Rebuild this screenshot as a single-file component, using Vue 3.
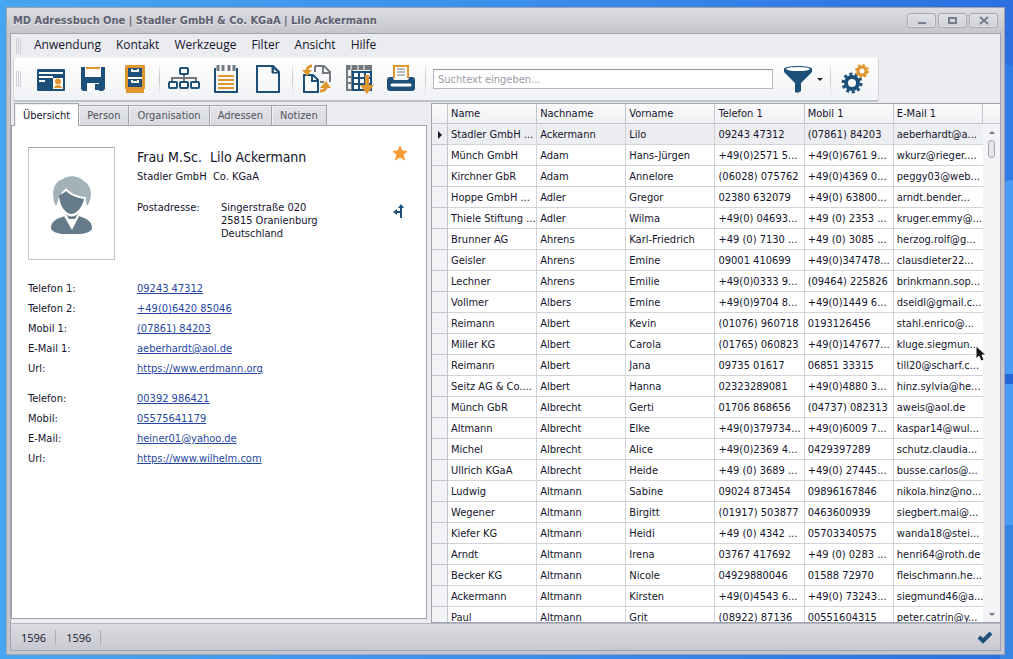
<script setup>
import { ref } from 'vue'

const query = ref('')
const menus = ['Anwendung', 'Kontakt', 'Werkzeuge', 'Filter', 'Ansicht', 'Hilfe']
const tabs = ['Übersicht', 'Person', 'Organisation', 'Adressen', 'Notizen']
const columns = ['Name', 'Nachname', 'Vorname', 'Telefon 1', 'Mobil 1', 'E-Mail 1']

const groups = [
  [
    ['Telefon 1:', '09243 47312'],
    ['Telefon 2:', '+49(0)6420 85046'],
    ['Mobil 1:', '(07861) 84203'],
    ['E-Mail 1:', 'aeberhardt@aol.de'],
    ['Url:', 'https://www.erdmann.org'],
  ],
  [
    ['Telefon:', '00392 986421'],
    ['Mobil:', '05575641179'],
    ['E-Mail:', 'heiner01@yahoo.de'],
    ['Url:', 'https://www.wilhelm.com'],
  ],
]

const rows = [
  ['Stadler GmbH ...', 'Ackermann', 'Lilo', '09243 47312', '(07861) 84203', 'aeberhardt@a...'],
  ['Münch GmbH', 'Adam', 'Hans-Jürgen', '+49(0)2571 5...', '+49(0)6761 9...', 'wkurz@rieger....'],
  ['Kirchner GbR', 'Adam', 'Annelore', '(06028) 075762', '+49(0)4369 0...', 'peggy03@web...'],
  ['Hoppe GmbH ...', 'Adler', 'Gregor', '02380 632079', '+49(0) 63800...', 'arndt.bender...'],
  ['Thiele Stiftung ...', 'Adler', 'Wilma', '+49(0) 04693...', '+49 (0) 2353 ...', 'kruger.emmy@...'],
  ['Brunner AG', 'Ahrens', 'Karl-Friedrich', '+49 (0) 7130 ...', '+49 (0) 3085 ...', 'herzog.rolf@g...'],
  ['Geisler', 'Ahrens', 'Emine', '09001 410699', '+49(0)347478...', 'clausdieter22...'],
  ['Lechner', 'Ahrens', 'Emilie', '+49(0)0333 9...', '(09464) 225826', 'brinkmann.sop...'],
  ['Vollmer', 'Albers', 'Emine', '+49(0)9704 8...', '+49(0)1449 6...', 'dseidl@gmail.c...'],
  ['Reimann', 'Albert', 'Kevin', '(01076) 960718', '0193126456', 'stahl.enrico@...'],
  ['Miller KG', 'Albert', 'Carola', '(01765) 060823', '+49(0)147677...', 'kluge.siegmun...'],
  ['Reimann', 'Albert', 'Jana', '09735 01617', '06851 33315', 'till20@scharf.c...'],
  ['Seitz AG & Co....', 'Albert', 'Hanna', '02323289081', '+49(0)4880 3...', 'hinz.sylvia@he...'],
  ['Münch GbR', 'Albrecht', 'Gerti', '01706 868656', '(04737) 082313', 'aweis@aol.de'],
  ['Altmann', 'Albrecht', 'Elke', '+49(0)379734...', '+49(0)6009 7...', 'kaspar14@wul...'],
  ['Michel', 'Albrecht', 'Alice', '+49(0)2369 4...', '0429397289', 'schutz.claudia...'],
  ['Ullrich KGaA', 'Albrecht', 'Heide', '+49 (0) 3689 ...', '+49(0) 27445...', 'busse.carlos@...'],
  ['Ludwig', 'Altmann', 'Sabine', '09024 873454', '09896167846', 'nikola.hinz@no...'],
  ['Wegener', 'Altmann', 'Birgitt', '(01917) 503877', '0463600939', 'siegbert.mai@...'],
  ['Kiefer KG', 'Altmann', 'Heidi', '+49 (0) 4342 ...', '05703340575', 'wanda18@stei...'],
  ['Arndt', 'Altmann', 'Irena', '03767 417692', '+49 (0) 0283 ...', 'henri64@roth.de'],
  ['Becker KG', 'Altmann', 'Nicole', '04929880046', '01588 72970', 'fleischmann.he...'],
  ['Ackermann', 'Altmann', 'Kirsten', '+49(0)4543 6...', '+49(0) 73243...', 'siegmund46@a...'],
  ['Paul', 'Altmann', 'Grit', '(08922) 87136', '00551604315', 'peter.catrin@y...'],
]
</script>

<template>
  <div class="desktop">
    <svg class="wallpaper" viewBox="0 0 1013 659" preserveAspectRatio="none" aria-hidden="true">
      <defs>
        <linearGradient id="sky" x1="0" y1="0" x2="1" y2="0">
          <stop offset="0" stop-color="#46a6f1" />
          <stop offset=".5" stop-color="#3b8fec" />
          <stop offset="1" stop-color="#2c70e0" />
        </linearGradient>
      </defs>
      <rect width="1013" height="659" fill="url(#sky)" />
      <path d="M1000 60 L1013 66 V190 L1000 180Z" fill="#2f7ce6" />
      <path d="M1000 182 L1013 180 V374 L1000 374Z" fill="#479df1" />
      <path d="M1000 374 H1013 V384 H1000Z" fill="#2466d6" />
      <path d="M1000 384 H1013 V525 H1000Z" fill="#479df1" />
      <path d="M1000 525 H1013 V659 H1000Z" fill="#3684e4" />
    </svg>

    <div class="window">
      <header class="titlebar">
        <h1>MD Adressbuch One | Stadler GmbH &amp; Co. KGaA | Lilo Ackermann</h1>
        <div class="controls">
          <button aria-label="Minimieren"><svg width="12" height="10"><path d="M2 7h8" stroke="#787c8c" stroke-width="2" /></svg></button>
          <button aria-label="Maximieren"><svg width="12" height="10"><rect x="2" y="2" width="7" height="5" fill="none" stroke="#787c8c" stroke-width="2" /></svg></button>
          <button aria-label="Schließen"><svg width="12" height="10"><path d="M2 1 10 8M10 1 2 8" stroke="#787c8c" stroke-width="2" /></svg></button>
        </div>
      </header>

      <div class="client">
        <nav class="menubar">
          <span class="grip"></span>
          <button v-for="m in menus" :key="m">{{ m }}</button>
        </nav>

        <div class="toolbar">
          <span class="grip"></span>
          <button class="tool" aria-label="Neuer Kontakt">
            <svg viewBox="0 0 32 32">
              <rect x="2" y="6" width="28" height="22" rx="1" fill="#1d5078" />
              <path d="M4 10h24M4 14h14M4 18h6" stroke="#fff" stroke-width="2" />
              <rect x="18" y="15" width="10" height="11" fill="#fff" />
              <circle cx="23" cy="18.500" r="3" fill="#e0962e" />
              <path d="M19 25c0-4 8-4 8 0Z" fill="#e0962e" />
            </svg>
          </button>
          <button class="tool" aria-label="Speichern">
            <svg viewBox="0 0 32 32">
              <path d="M4 4h24v22l-2 2H6l-2-2Z" fill="#1d5078" />
              <path d="M8 4h16v10H8ZM10 20h12v8H10Z" fill="#fff" />
              <rect x="9" y="4" width="14" height="2" fill="#e0962e" />
              <path d="M18 21h4v6h-4Z" fill="#1d5078" />
            </svg>
          </button>
          <button class="tool" aria-label="Archiv">
            <svg viewBox="0 0 32 32">
              <path d="M6 3q0-1 1-1h18q1 0 1 1v23h-1v4H7v-4H6Z" fill="#e0962e" />
              <path d="M9 5h14v9H9ZM9 16h14v8H9Z" fill="#1d5078" />
              <path d="M9 15h14" stroke="#fff" stroke-width="2" />
              <path d="M13 6v2h6V6M13 17v2h6V17" fill="none" stroke="#fff" stroke-width="2" />
            </svg>
          </button>
          <span class="sep"></span>
          <button class="tool" aria-label="Struktur">
            <svg viewBox="0 0 32 32" fill="none">
              <path d="M16 11v8M4 19v-4h24v4" stroke="#747980" stroke-width="2" />
              <g stroke="#1d5078" stroke-width="2" fill="#fff">
                <rect x="12" y="5" width="8" height="6" rx="1" />
                <rect x="1" y="19" width="8" height="6" rx="1" />
                <rect x="12" y="19" width="8" height="6" rx="1" />
                <rect x="23" y="19" width="8" height="6" rx="1" />
              </g>
            </svg>
          </button>
          <button class="tool" aria-label="Notiz">
            <svg viewBox="0 0 32 32" fill="none">
              <path d="M5 5v24h22V5" stroke="#1d5078" stroke-width="2" stroke-linejoin="round" />
              <path d="M8 2v6M13 2v6M19 2v6M24 2v6" stroke="#747980" stroke-width="3" />
              <path d="M8 13h16M8 17h16M8 21h16M8 25h16" stroke="#e0962e" stroke-width="2" />
            </svg>
          </button>
          <button class="tool" aria-label="Dokument">
            <svg viewBox="0 0 32 32" fill="none">
              <path d="M5 3h16l6 6v20H5Z" stroke="#1d5078" stroke-width="2" />
              <path d="M20 3v7h7Z" fill="#1d5078" stroke="#1d5078" />
              <path d="M22 6v3h3Z" fill="#fff" />
            </svg>
          </button>
          <span class="sep"></span>
          <button class="tool" aria-label="Abgleichen">
            <svg viewBox="0 0 32 32" fill="none">
              <path d="M14 3h9l6 6v10M14 3v6M19 19h4M22 3v7h7" stroke="#747980" stroke-width="2" />
              <path d="M3 12h9l5 5v12H3Z" fill="#fff" stroke="#1d5078" stroke-width="2" />
              <path d="M11 12v6h6" stroke="#1d5078" stroke-width="2" />
              <path d="M11 3C7 3 6 5 6 9" stroke="#e0962e" stroke-width="3" />
              <path d="M1 7h10l-5 6Z" fill="#e0962e" />
              <path d="M19 28c5 0 6-2 6-5" stroke="#e0962e" stroke-width="3" />
              <path d="M19 25l6-7 5 7Z" fill="#e0962e" />
            </svg>
          </button>
          <button class="tool" aria-label="Tabelle exportieren">
            <svg viewBox="0 0 32 32" fill="none">
              <path d="M3 2h26v5H3Z" fill="#747980" />
              <path d="M8 2v5M15 2v5M21 2v5" stroke="#fff" />
              <path d="M4 7v20h6M3 14h6M3 20h6M28 7v3M9 7v20" stroke="#747980" stroke-width="2" />
              <path d="M10 9h18v18H10ZM10 15h18M10 21h18M16 9v18M22 9v18" stroke="#1d5078" stroke-width="2" />
              <path d="M22 12h4v10h5l-7 9-7-9h5Z" fill="#e0962e" />
            </svg>
          </button>
          <button class="tool" aria-label="Drucken">
            <svg viewBox="0 0 32 32" fill="none">
              <path d="M9 15V3h14v12" fill="#fff" stroke="#e0962e" stroke-width="2" />
              <path d="M12 6h8M12 9h8M12 12h8" stroke="#747980" />
              <path d="M5 14h3q0 3 2 3h12q2 0 2-3h3q3 0 3 3v8q0 3-3 3H5q-3 0-3-3v-8q0-3 3-3Z" fill="#1d5078" />
              <path d="M7 22h18" stroke="#fff" stroke-width="3" stroke-linecap="round" />
            </svg>
          </button>
          <span class="sep"></span>
          <input v-model="query" class="search" type="text" aria-label="Suchtext" placeholder="Suchtext eingeben..." />
          <button class="tool filter" aria-label="Filter">
            <svg viewBox="0 0 32 32" fill="none">
              <path d="M2 6c0-4 28-4 28 0v3L19 20v8q-3 3-6 1V20L2 9Z" fill="#1d5078" />
              <ellipse cx="16" cy="6" rx="12" ry="2" fill="#fff" />
            </svg>
            <span class="caret"></span>
          </button>
          <span class="sep"></span>
          <button class="tool" aria-label="Einstellungen">
            <svg viewBox="0 0 32 32" fill="none">
              <circle cx="13" cy="20" r="6" stroke="#1d5078" stroke-width="4" />
              <circle cx="13" cy="20" r="9" stroke="#1d5078" stroke-width="3" stroke-dasharray="3 2.650" />
              <circle cx="23" cy="8" r="4" stroke="#e0962e" stroke-width="3" />
              <circle cx="23" cy="8" r="6" stroke="#e0962e" stroke-width="2" stroke-dasharray="2.400 2.300" />
            </svg>
          </button>
        </div>

        <main class="work">
          <section class="detail">
            <div class="tabs" role="tablist">
              <button v-for="(t, i) in tabs" :key="t" role="tab" :aria-selected="i === 0" :class="{ active: i === 0 }">{{ t }}</button>
            </div>
            <div class="sheet">
              <div class="person">
                <div class="photo">
                  <svg viewBox="0 0 42 60" width="42" height="60">
                    <path d="M4 31C-1 15 5 7 12 5c6-5 17-3 22 3 8 5 7 18 2 24l-2-8Z" fill="#a3b1b9" />
                    <path d="M6 34C6 24 10 19 15 14c5 6 14 9 20 9 0 3-1 6 0 8l-7 10-7 2-9-3Z" fill="#fff" />
                    <path d="M8 21c3-1 5-2 7-4 5 5 12 7 18 8-1 7-7 15-13 15S8 30 8 21Z" fill="#667b89" />
                    <path d="M0 54c0-6 4-9 14-12l7 4 7-4c9 3 13 6 13 12 0 9-41 9-41 0Z" fill="#667b89" />
                    <path d="M13 42l8 14 7-14-4-1-3 3-4-3Z" fill="#fff" />
                    <path d="M15 40q5 5 12 0l-3 5h-6Z" fill="#667b89" />
                  </svg>
                </div>
                <div class="identity">
                  <h2>Frau M.Sc.&nbsp; Lilo Ackermann</h2>
                  <p>Stadler GmbH&nbsp; Co. KGaA</p>
                  <div class="address">
                    <span>Postadresse:</span>
                    <address>Singerstraße 020<br />25815 Oranienburg<br />Deutschland</address>
                  </div>
                </div>
                <div class="marks">
                  <button aria-label="Favorit">
                    <svg width="16" height="16" viewBox="0 0 16 16"><path d="M8 1l2 5 5 .3-4 3.500 1.500 5L8 12l-4.500 2.800L5 9.800 1 6.300 6 6Z" fill="#f59c34" stroke="#f59c34" stroke-linejoin="round" /></svg>
                  </button>
                  <button aria-label="Route">
                    <svg width="16" height="16" viewBox="0 0 16 16" fill="none"><path d="M9 14V3M9 8H4" stroke="#1d5078" stroke-width="2" /><path d="M6 4l3-4 3 4ZM5 5v6L1 8Z" fill="#1d5078" /></svg>
                  </button>
                </div>
              </div>
              <dl v-for="(g, i) in groups" :key="i" class="contacts">
                <template v-for="item in g" :key="item[0]">
                  <dt>{{ item[0] }}</dt>
                  <dd><a href="#">{{ item[1] }}</a></dd>
                </template>
              </dl>
            </div>
          </section>

          <section class="list">
            <table>
              <colgroup>
                <col class="mark-col" />
                <col v-for="c in columns" :key="c" />
                <col class="scroll-col" />
              </colgroup>
              <thead>
                <tr>
                  <th></th>
                  <th v-for="c in columns" :key="c" scope="col">{{ c }}</th>
                  <th></th>
                </tr>
              </thead>
              <tbody>
                <tr v-for="(r, i) in rows" :key="i" :class="{ current: i === 0 }">
                  <td class="mark"><span v-if="i === 0" class="pointer"></span></td>
                  <td v-for="(c, j) in r" :key="j">{{ c }}</td>
                  <td class="gutter"></td>
                </tr>
              </tbody>
            </table>
            <div class="scrollbar" aria-hidden="true">
              <span class="up"></span>
              <span class="thumb"></span>
              <span class="down"></span>
            </div>
            <svg class="cursor" width="12" height="18" viewBox="0 0 12 18" aria-hidden="true">
              <path d="M1 1v13l3-3 2 5 3-1-2-5h4Z" fill="#111" stroke="#fff" />
            </svg>
          </section>
        </main>

        <footer class="status">
          <span>1596</span>
          <span>1596</span>
          <svg width="16" height="14" viewBox="0 0 16 14"><path d="M2 7l4 4 8-8" fill="none" stroke="#1d5078" stroke-width="4" /></svg>
        </footer>
      </div>
    </div>
  </div>
</template>

<style>
body {
  margin: 0;
  overflow: hidden;
}
</style>

<style scoped>
* {
  box-sizing: border-box;
}
button {
  border: 0;
  padding: 0;
  margin: 0;
  background: none;
  font: inherit;
  color: inherit;
}
svg {
  display: block;
}
.desktop {
  position: relative;
  display: flex;
  height: 100vh;
  padding: 7px 8px 4px 6px;
  font-family: "DejaVu Sans Condensed", "DejaVu Sans", sans-serif;
  font-size: 11px;
  color: #14142c;
}
.wallpaper {
  position: absolute;
  inset: 0;
  width: 100%;
  height: 100%;
}
.window {
  position: relative;
  flex: 1;
  min-width: 0;
  display: flex;
  flex-direction: column;
  padding: 0 3px 3px;
  border: 1px solid #a0a2b0;
  background: #c5c6cf;
}
.titlebar {
  display: flex;
  flex: none;
  align-items: center;
  justify-content: space-between;
  height: 25px;
  margin: 0 -3px;
  padding: 0 6px;
  background: linear-gradient(#dcdde2, #c5c6cd);
}
h1 {
  margin: 0;
  font-size: 11px;
  font-weight: bold;
  color: #5d5e70;
  text-shadow: 0 1px #eee;
}
.controls {
  display: flex;
  gap: 2px;
}
.controls button {
  display: grid;
  place-items: center;
  width: 29px;
  height: 15px;
  border: 1px solid #a5a7b2;
  border-radius: 3px;
  background: linear-gradient(#e0e1e6, #cfd0d7);
  box-shadow: inset 0 0 0 1px #e3e4e9;
}
.client {
  display: flex;
  flex: 1;
  flex-direction: column;
  min-height: 0;
  border: 1px solid #a0a2b0;
  background: #ebecf0;
}
.menubar {
  display: flex;
  flex: none;
  align-items: center;
  gap: 15px;
  height: 23px;
  padding-left: 5px;
  font: 12px "Open Sans", "Noto Sans", sans-serif;
}
.menubar .grip {
  margin-right: -3px;
}
.menubar button {
  height: 23px;
  padding-bottom: 2px;
}
.grip {
  width: 6px;
  height: 16px;
  background: repeating-linear-gradient(90deg, #cdced5 0 1px, transparent 1px 2px);
}
.toolbar {
  display: flex;
  flex: none;
  align-items: center;
  align-self: flex-start;
  width: 866px;
  max-width: calc(100% - 20px);
  height: 45px;
  margin-left: 2px;
  padding: 0 2px;
  border: 1px solid #d5d6dc;
  border-top-color: #f4f4f6;
  border-bottom: 2px solid #bfc1c9;
  border-radius: 3px;
  background: linear-gradient(#fff, #f1f2f5);
}
.toolbar .grip {
  margin-right: 8px;
}
.tool {
  display: flex;
  flex: none;
  justify-content: center;
  align-items: center;
  width: 42px;
}
.tool svg {
  width: 32px;
  height: 32px;
}
.filter {
  width: 50px;
}
.caret {
  margin-left: 3px;
  border: 3px solid transparent;
  border-top-color: #222;
  border-bottom: 0;
}
.sep {
  flex: none;
  width: 1px;
  height: 36px;
  margin: 0 3px;
  background: linear-gradient(transparent, #c3c5cc, transparent);
}
.search {
  flex: 1;
  min-width: 80px;
  height: 20px;
  margin: 0 4px;
  padding: 0 4px;
  border: 1px solid #b6b8c2;
  border-top-color: #9597a4;
  background: #fff;
  font: inherit;
}
.search::placeholder {
  color: #9b9ca6;
}
.work {
  display: grid;
  flex: 1;
  grid-template-columns: 416px minmax(0, 1fr);
  gap: 4px;
  min-height: 0;
  padding-top: 1px;
}
.detail {
  display: flex;
  flex-direction: column;
  min-height: 0;
  padding-bottom: 4px;
}
.tabs {
  display: flex;
  align-items: flex-end;
  height: 22px;
  margin-left: 3px;
  color: #50515f;
}
.tabs button {
  height: 20px;
  padding: 0 8px;
  border: 1px solid #a3a5b0;
  border-left-width: 0;
  border-bottom: 0;
  background: linear-gradient(#e4e5e9, #dadbe0);
  box-shadow: inset 1px 1px #f0f0f3;
}
.tabs .active {
  position: relative;
  height: 23px;
  margin-bottom: -1px;
  border-left-width: 1px;
  background: #fff;
  color: #14142c;
}
.sheet {
  flex: 1;
  min-height: 0;
  padding: 21px 18px 0 16px;
  border: 1px solid #a0a2b0;
  background: #fff;
}
.person {
  display: flex;
  height: 132px;
}
.photo {
  display: grid;
  place-items: center;
  flex: none;
  width: 87px;
  height: 113px;
  border: 1px solid #c3c5cc;
  border-top-color: #a0a2b0;
}
.identity {
  flex: 1;
  margin-left: 22px;
}
h2 {
  margin: 0 0 1px;
  font-size: 14px;
  font-weight: normal;
  line-height: 20px;
}
p {
  margin: 0;
  line-height: 18px;
}
.address {
  display: grid;
  grid-template-columns: 84px 1fr;
  margin-top: 15px;
  line-height: 13px;
}
address {
  font-style: normal;
}
.marks {
  display: flex;
  flex-direction: column;
  gap: 43px;
  margin-top: -2px;
}
.contacts {
  display: grid;
  grid-template-columns: 109px 1fr;
  margin: 0 0 10px;
  line-height: 20px;
}
dd {
  margin: 0;
}
a {
  color: #2547a4;
}
.list {
  position: relative;
  min-height: 0;
  overflow: hidden;
  border: 1px solid #a0a2b0;
  border-right: 0;
  background: #fff;
}
table {
  width: 100%;
  table-layout: fixed;
  border-collapse: separate;
  border-spacing: 0;
}
.mark-col {
  width: 16px;
}
.scroll-col {
  width: 17px;
}
th,
td {
  height: 21px;
  padding: 0 0 0 3px;
  border-right: 1px solid #d3d4da;
  border-bottom: 1px solid #d3d4da;
  font-weight: normal;
  line-height: 18px;
  text-align: left;
  white-space: nowrap;
}
th {
  height: 20px;
  border-color: #c3c5cc;
  background: linear-gradient(#fafafb, #f0f1f3);
}
td {
  padding-top: 1px;
}
th:last-child {
  border-right: 0;
}
.mark {
  background: #f3f4f6;
  border-color: #c3c5cc;
}
.current td {
  background: #edeef1;
}
.pointer {
  display: block;
  width: 0;
  margin-left: 3px;
  border: 4px solid transparent;
  border-left-color: #14142c;
  border-right: 0;
}
td:nth-child(7) {
  border-right: 0;
}
.gutter {
  border: 0;
}
.scrollbar {
  position: absolute;
  top: 20px;
  right: 0;
  bottom: 0;
  display: flex;
  flex-direction: column;
  align-items: center;
  width: 17px;
  padding: 7px 0 6px;
  background: #f3f4f6;
}
.up,
.down {
  border: 3px solid transparent;
}
.up {
  border-top: 0;
  border-bottom-color: #777985;
}
.thumb {
  width: 7px;
  height: 18px;
  margin-top: 6px;
  border: 1px solid #a5a7b2;
  border-radius: 3px;
  background: #e4e5e9;
}
.down {
  margin-top: auto;
  border-bottom: 0;
  border-top-color: #777985;
}
.cursor {
  position: absolute;
  top: 241px;
  right: 13px;
}
.status {
  display: flex;
  flex: none;
  align-items: center;
  height: 27px;
  padding: 0 7px 0 0;
  border-top: 1px solid #b4b6c0;
  background: linear-gradient(#dcdde2, #c8c9d0);
  font: 11px "Open Sans", "Noto Sans", sans-serif;
}
.status span {
  padding: 0 9px 0 10px;
  border-right: 1px solid #a9abb5;
}
.status svg {
  margin-left: auto;
}
</style>
